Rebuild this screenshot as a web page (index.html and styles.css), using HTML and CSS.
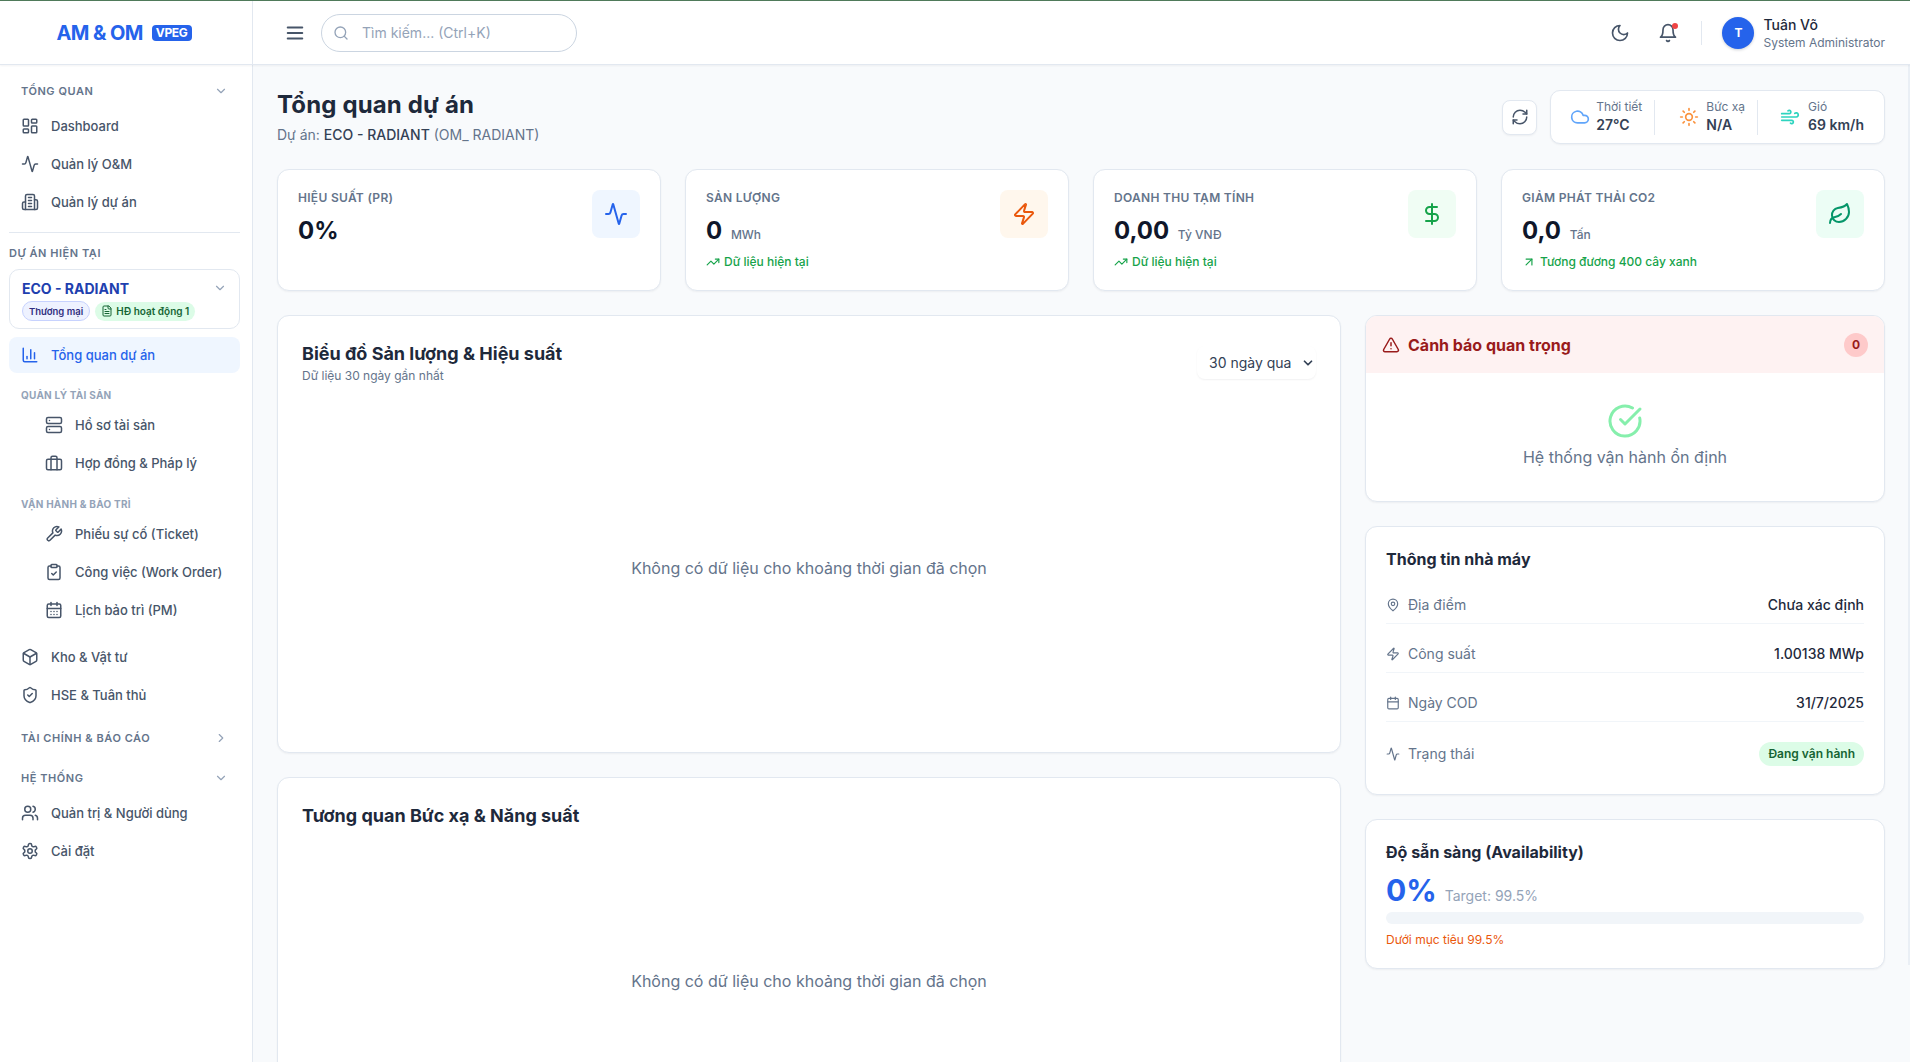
FILE: index.html
```html
<!DOCTYPE html>
<html lang="vi">
<head>
<meta charset="utf-8">
<title>AM &amp; OM</title>
<link rel="stylesheet" href="styles.css">
</head>
<body>
<svg class="sprite" width="0" height="0">
  <defs>
    <symbol id="i-dashboard" viewBox="0 0 24 24"><rect width="7" height="9" x="3" y="3" rx="1"/><rect width="7" height="5" x="14" y="3" rx="1"/><rect width="7" height="9" x="14" y="12" rx="1"/><rect width="7" height="5" x="3" y="16" rx="1"/></symbol>
    <symbol id="i-activity" viewBox="0 0 24 24"><path d="M22 12h-2.48a2 2 0 0 0-1.93 1.46l-2.35 8.36a.25.25 0 0 1-.48 0L9.24 2.18a.25.25 0 0 0-.48 0l-2.35 8.36A2 2 0 0 1 4.49 12H2"/></symbol>
    <symbol id="i-building" viewBox="0 0 24 24"><path d="M6 22V4a2 2 0 0 1 2-2h8a2 2 0 0 1 2 2v18Z"/><path d="M6 12H4a2 2 0 0 0-2 2v6a2 2 0 0 0 2 2h2"/><path d="M18 9h2a2 2 0 0 1 2 2v9a2 2 0 0 1-2 2h-2"/><path d="M10 6h4"/><path d="M10 10h4"/><path d="M10 14h4"/><path d="M10 18h4"/></symbol>
    <symbol id="i-down" viewBox="0 0 24 24"><path d="m6 9 6 6 6-6"/></symbol>
    <symbol id="i-right" viewBox="0 0 24 24"><path d="m9 18 6-6-6-6"/></symbol>
    <symbol id="i-chart" viewBox="0 0 24 24"><path d="M3 3v16a2 2 0 0 0 2 2h16"/><path d="M18 17V9"/><path d="M13 17V5"/><path d="M8 17v-3"/></symbol>
    <symbol id="i-server" viewBox="0 0 24 24"><rect width="20" height="8" x="2" y="2" rx="2"/><rect width="20" height="8" x="2" y="14" rx="2"/><path d="M6 6h.01"/><path d="M6 18h.01"/></symbol>
    <symbol id="i-briefcase" viewBox="0 0 24 24"><path d="M16 21V5a2 2 0 0 0-2-2h-4a2 2 0 0 0-2 2v16"/><rect width="20" height="14" x="2" y="7" rx="2"/></symbol>
    <symbol id="i-wrench" viewBox="0 0 24 24"><path d="M14.7 6.3a1 1 0 0 0 0 1.4l1.6 1.6a1 1 0 0 0 1.4 0l3.77-3.77a6 6 0 0 1-7.94 7.94l-6.91 6.91a2.12 2.12 0 0 1-3-3l6.91-6.91a6 6 0 0 1 7.94-7.94l-3.76 3.76z"/></symbol>
    <symbol id="i-clipboard" viewBox="0 0 24 24"><rect width="8" height="4" x="8" y="2" rx="1" ry="1"/><path d="M16 4h2a2 2 0 0 1 2 2v14a2 2 0 0 1-2 2H6a2 2 0 0 1-2-2V6a2 2 0 0 1 2-2h2"/><path d="m9 14 2 2 4-4"/></symbol>
    <symbol id="i-calendar-days" viewBox="0 0 24 24"><path d="M8 2v4"/><path d="M16 2v4"/><rect width="18" height="18" x="3" y="4" rx="2"/><path d="M3 10h18"/><path d="M8 14h.01"/><path d="M12 14h.01"/><path d="M16 14h.01"/><path d="M8 18h.01"/><path d="M12 18h.01"/><path d="M16 18h.01"/></symbol>
    <symbol id="i-box" viewBox="0 0 24 24"><path d="M21 8a2 2 0 0 0-1-1.73l-7-4a2 2 0 0 0-2 0l-7 4A2 2 0 0 0 3 8v8a2 2 0 0 0 1 1.73l7 4a2 2 0 0 0 2 0l7-4A2 2 0 0 0 21 16Z"/><path d="m3.3 7 8.7 5 8.7-5"/><path d="M12 22V12"/></symbol>
    <symbol id="i-shield" viewBox="0 0 24 24"><path d="M20 13c0 5-3.5 7.5-7.66 8.95a1 1 0 0 1-.67-.01C7.5 20.5 4 18 4 13V6a1 1 0 0 1 1-1c2 0 4.5-1.2 6.24-2.72a1.17 1.17 0 0 1 1.52 0C14.51 3.81 17 5 19 5a1 1 0 0 1 1 1z"/><path d="m9 12 2 2 4-4"/></symbol>
    <symbol id="i-users" viewBox="0 0 24 24"><path d="M16 21v-2a4 4 0 0 0-4-4H6a4 4 0 0 0-4 4v2"/><circle cx="9" cy="7" r="4"/><path d="M22 21v-2a4 4 0 0 0-3-3.87"/><path d="M16 3.13a4 4 0 0 1 0 7.75"/></symbol>
    <symbol id="i-settings" viewBox="0 0 24 24"><path d="M12.22 2h-.44a2 2 0 0 0-2 2v.18a2 2 0 0 1-1 1.73l-.43.25a2 2 0 0 1-2 0l-.15-.08a2 2 0 0 0-2.73.73l-.22.38a2 2 0 0 0 .73 2.73l.15.1a2 2 0 0 1 1 1.72v.51a2 2 0 0 1-1 1.74l-.15.09a2 2 0 0 0-.73 2.73l.22.38a2 2 0 0 0 2.73.73l.15-.08a2 2 0 0 1 2 0l.43.25a2 2 0 0 1 1 1.73V20a2 2 0 0 0 2 2h.44a2 2 0 0 0 2-2v-.18a2 2 0 0 1 1-1.73l.43-.25a2 2 0 0 1 2 0l.15.08a2 2 0 0 0 2.73-.73l.22-.39a2 2 0 0 0-.73-2.73l-.15-.08a2 2 0 0 1-1-1.74v-.5a2 2 0 0 1 1-1.74l.15-.09a2 2 0 0 0 .73-2.73l-.22-.38a2 2 0 0 0-2.73-.73l-.15.08a2 2 0 0 1-2 0l-.43-.25a2 2 0 0 1-1-1.73V4a2 2 0 0 0-2-2z"/><circle cx="12" cy="12" r="3"/></symbol>
    <symbol id="i-menu" viewBox="0 0 24 24"><path d="M4 12h16"/><path d="M4 6h16"/><path d="M4 18h16"/></symbol>
    <symbol id="i-search" viewBox="0 0 24 24"><circle cx="11" cy="11" r="8"/><path d="m21 21-4.3-4.3"/></symbol>
    <symbol id="i-moon" viewBox="0 0 24 24"><path d="M12 3a6 6 0 0 0 9 9 9 9 0 1 1-9-9Z"/></symbol>
    <symbol id="i-bell" viewBox="0 0 24 24"><path d="M6 8a6 6 0 0 1 12 0c0 7 3 9 3 9H3s3-2 3-9"/><path d="M10.3 21a1.94 1.94 0 0 0 3.4 0"/></symbol>
    <symbol id="i-refresh" viewBox="0 0 24 24"><path d="M3 12a9 9 0 0 1 9-9 9.75 9.75 0 0 1 6.74 2.74L21 8"/><path d="M21 3v5h-5"/><path d="M21 12a9 9 0 0 1-9 9 9.75 9.75 0 0 1-6.74-2.74L3 16"/><path d="M8 16H3v5"/></symbol>
    <symbol id="i-cloud" viewBox="0 0 24 24"><path d="M17.5 19H9a7 7 0 1 1 6.71-9h1.79a4.5 4.5 0 1 1 0 9Z"/></symbol>
    <symbol id="i-sun" viewBox="0 0 24 24"><circle cx="12" cy="12" r="4"/><path d="M12 2v2"/><path d="M12 20v2"/><path d="m4.93 4.93 1.41 1.41"/><path d="m17.66 17.66 1.41 1.41"/><path d="M2 12h2"/><path d="M20 12h2"/><path d="m6.34 17.66-1.41 1.41"/><path d="m19.07 4.93-1.41 1.41"/></symbol>
    <symbol id="i-wind" viewBox="0 0 24 24"><path d="M17.7 7.7a2.5 2.5 0 1 1 1.8 4.3H2"/><path d="M9.6 4.6A2 2 0 1 1 11 8H2"/><path d="M12.6 19.4A2 2 0 1 0 14 16H2"/></symbol>
    <symbol id="i-zap" viewBox="0 0 24 24"><path d="M4 14a1 1 0 0 1-.78-1.63l9.9-10.2a.5.5 0 0 1 .86.46l-1.92 6.02A1 1 0 0 0 13 10h7a1 1 0 0 1 .78 1.63l-9.9 10.2a.5.5 0 0 1-.86-.46l1.92-6.02A1 1 0 0 0 11 14z"/></symbol>
    <symbol id="i-dollar" viewBox="0 0 24 24"><path d="M12 2v20"/><path d="M17 5H9.5a3.5 3.5 0 0 0 0 7h5a3.5 3.5 0 0 1 0 7H6"/></symbol>
    <symbol id="i-leaf" viewBox="0 0 24 24"><path d="M11 20A7 7 0 0 1 9.8 6.1C15.5 5 17 4.48 19 2c1 2 2 4.18 2 8 0 5.5-4.78 10-10 10Z"/><path d="M2 21c0-3 1.85-5.36 5.08-6C9.5 14.52 12 13 13 12"/></symbol>
    <symbol id="i-trend" viewBox="0 0 24 24"><path d="M22 7 13.5 15.5 8.5 10.5 2 17"/><path d="M16 7h6v6"/></symbol>
    <symbol id="i-arrow" viewBox="0 0 24 24"><path d="M7 7h10v10"/><path d="M7 17 17 7"/></symbol>
    <symbol id="i-alert" viewBox="0 0 24 24"><path d="m21.73 18-8-14a2 2 0 0 0-3.48 0l-8 14A2 2 0 0 0 4 21h16a2 2 0 0 0 1.73-3"/><path d="M12 9v4"/><path d="M12 17h.01"/></symbol>
    <symbol id="i-check" viewBox="0 0 24 24"><path d="M21.801 10A10 10 0 1 1 17 3.335"/><path d="m9 11 3 3L22 4"/></symbol>
    <symbol id="i-pin" viewBox="0 0 24 24"><path d="M20 10c0 6-8 12-8 12s-8-6-8-12a8 8 0 0 1 16 0Z"/><circle cx="12" cy="10" r="3"/></symbol>
    <symbol id="i-calendar" viewBox="0 0 24 24"><path d="M8 2v4"/><path d="M16 2v4"/><rect width="18" height="18" x="3" y="4" rx="2"/><path d="M3 10h18"/></symbol>
    <symbol id="i-file" viewBox="0 0 24 24"><path d="M15 2H6a2 2 0 0 0-2 2v16a2 2 0 0 0 2 2h12a2 2 0 0 0 2-2V7Z"/><path d="M14 2v4a2 2 0 0 0 2 2h4"/><path d="M10 9H8"/><path d="M16 13H8"/><path d="M16 17H8"/></symbol>
  </defs>
</svg>

<div class="app">
  <header class="topbar">
    <div class="brand">
      <span class="brand-name">AM &amp; OM</span>
      <span class="brand-tag">VPEG</span>
    </div>
    <div class="topbar-main">
      <div class="topbar-left">
        <svg class="ico ico-22 c-slate"><use href="#i-menu"/></svg>
        <div class="search">
          <svg class="ico ico-16 c-muted"><use href="#i-search"/></svg>
          <span>Tìm kiếm... (Ctrl+K)</span>
        </div>
      </div>
      <div class="topbar-right">
        <svg class="ico ico-20 c-slate"><use href="#i-moon"/></svg>
        <div class="bell">
          <svg class="ico ico-20 c-slate"><use href="#i-bell"/></svg>
          <span class="bell-dot"></span>
        </div>
        <span class="topbar-sep"></span>
        <div class="user">
          <span class="avatar">T</span>
          <div class="user-text">
            <div class="user-name">Tuân Võ</div>
            <div class="user-role">System Administrator</div>
          </div>
        </div>
      </div>
    </div>
  </header>

  <div class="body">
    <aside class="sidebar">
      <div class="group-head first"><span>TỔNG QUAN</span><svg class="ico ico-14 c-muted"><use href="#i-down"/></svg></div>
      <nav class="nav nav-a">
        <a class="nav-item"><svg class="ico ico-18"><use href="#i-dashboard"/></svg>Dashboard</a>
        <a class="nav-item"><svg class="ico ico-18"><use href="#i-activity"/></svg>Quản lý O&amp;M</a>
        <a class="nav-item"><svg class="ico ico-18"><use href="#i-building"/></svg>Quản lý dự án</a>
      </nav>
      <div class="side-divider"></div>
      <div class="project-label">DỰ ÁN HIỆN TẠI</div>
      <div class="project-card">
        <div class="project-top"><span class="project-name">ECO - RADIANT</span><svg class="ico ico-14 c-muted"><use href="#i-down"/></svg></div>
        <div class="project-tags">
          <span class="tag tag-purple">Thương mại</span>
          <span class="tag tag-green"><svg class="ico ico-12"><use href="#i-file"/></svg>HĐ hoạt động 1</span>
        </div>
      </div>
      <a class="nav-item active"><svg class="ico ico-18"><use href="#i-chart"/></svg>Tổng quan dự án</a>

      <div class="sub-label sub-1">QUẢN LÝ TÀI SẢN</div>
      <nav class="nav nav-sub">
        <a class="nav-item"><svg class="ico ico-18"><use href="#i-server"/></svg>Hồ sơ tài sản</a>
        <a class="nav-item"><svg class="ico ico-18"><use href="#i-briefcase"/></svg>Hợp đồng &amp; Pháp lý</a>
      </nav>
      <div class="sub-label sub-2">VẬN HÀNH &amp; BẢO TRÌ</div>
      <nav class="nav nav-sub">
        <a class="nav-item"><svg class="ico ico-18"><use href="#i-wrench"/></svg>Phiếu sự cố (Ticket)</a>
        <a class="nav-item"><svg class="ico ico-18"><use href="#i-clipboard"/></svg>Công việc (Work Order)</a>
        <a class="nav-item"><svg class="ico ico-18"><use href="#i-calendar-days"/></svg>Lịch bảo trì (PM)</a>
      </nav>
      <nav class="nav nav-b">
        <a class="nav-item"><svg class="ico ico-18"><use href="#i-box"/></svg>Kho &amp; Vật tư</a>
        <a class="nav-item"><svg class="ico ico-18"><use href="#i-shield"/></svg>HSE &amp; Tuân thủ</a>
      </nav>
      <div class="group-head fin"><span>TÀI CHÍNH &amp; BÁO CÁO</span><svg class="ico ico-14 c-muted"><use href="#i-right"/></svg></div>
      <div class="group-head sys"><span>HỆ THỐNG</span><svg class="ico ico-14 c-muted"><use href="#i-down"/></svg></div>
      <nav class="nav nav-c">
        <a class="nav-item"><svg class="ico ico-18"><use href="#i-users"/></svg>Quản trị &amp; Người dùng</a>
        <a class="nav-item"><svg class="ico ico-18"><use href="#i-settings"/></svg>Cài đặt</a>
      </nav>
    </aside>

    <main class="main">
      <div class="page-head">
        <div>
          <h1 class="page-title">Tổng quan dự án</h1>
          <p class="page-sub">Dự án: <b>ECO - RADIANT</b> (OM_ RADIANT)</p>
        </div>
        <div class="head-tools">
          <button class="refresh"><svg class="ico ico-18"><use href="#i-refresh"/></svg></button>
          <div class="weather">
            <div class="w-item">
              <svg class="ico ico-20 c-blue-l"><use href="#i-cloud"/></svg>
              <div><div class="w-label">Thời tiết</div><div class="w-value">27°C</div></div>
            </div>
            <div class="w-item">
              <svg class="ico ico-20 c-orange-l"><use href="#i-sun"/></svg>
              <div><div class="w-label">Bức xạ</div><div class="w-value">N/A</div></div>
            </div>
            <div class="w-item">
              <svg class="ico ico-20 c-teal"><use href="#i-wind"/></svg>
              <div><div class="w-label">Gió</div><div class="w-value">69 km/h</div></div>
            </div>
          </div>
        </div>
      </div>

      <section class="kpis">
        <article class="card kpi">
          <div>
            <div class="kpi-label">HIỆU SUẤT (PR)</div>
            <div class="kpi-value">0%</div>
          </div>
          <span class="kpi-icon bg-blue"><svg class="ico ico-24"><use href="#i-activity"/></svg></span>
        </article>
        <article class="card kpi">
          <div>
            <div class="kpi-label">SẢN LƯỢNG</div>
            <div class="kpi-value">0 <small>MWh</small></div>
            <div class="kpi-trend"><svg class="ico ico-14"><use href="#i-trend"/></svg>Dữ liệu hiện tại</div>
          </div>
          <span class="kpi-icon bg-orange"><svg class="ico ico-24"><use href="#i-zap"/></svg></span>
        </article>
        <article class="card kpi">
          <div>
            <div class="kpi-label">DOANH THU TẠM TÍNH</div>
            <div class="kpi-value">0,00 <small>Tỷ VNĐ</small></div>
            <div class="kpi-trend"><svg class="ico ico-14"><use href="#i-trend"/></svg>Dữ liệu hiện tại</div>
          </div>
          <span class="kpi-icon bg-green"><svg class="ico ico-24"><use href="#i-dollar"/></svg></span>
        </article>
        <article class="card kpi">
          <div>
            <div class="kpi-label">GIẢM PHÁT THẢI CO2</div>
            <div class="kpi-value">0,0 <small>Tấn</small></div>
            <div class="kpi-trend"><svg class="ico ico-14"><use href="#i-arrow"/></svg>Tương đương 400 cây xanh</div>
          </div>
          <span class="kpi-icon bg-emerald"><svg class="ico ico-24"><use href="#i-leaf"/></svg></span>
        </article>
      </section>

      <section class="columns">
        <div class="col-left">
          <article class="card chart chart-1">
            <div class="chart-head">
              <div>
                <h2 class="chart-title">Biểu đồ Sản lượng &amp; Hiệu suất</h2>
                <p class="chart-sub">Dữ liệu 30 ngày gần nhất</p>
              </div>
              <div class="range">30 ngày qua<svg class="ico ico-14"><use href="#i-down"/></svg></div>
            </div>
            <div class="chart-empty">Không có dữ liệu cho khoảng thời gian đã chọn</div>
          </article>
          <article class="card chart chart-2">
            <div class="chart-head">
              <h2 class="chart-title">Tương quan Bức xạ &amp; Năng suất</h2>
            </div>
            <div class="chart-empty">Không có dữ liệu cho khoảng thời gian đã chọn</div>
          </article>
        </div>

        <div class="col-right">
          <article class="card alert">
            <div class="alert-head">
              <svg class="ico ico-18"><use href="#i-alert"/></svg>
              <span class="alert-title">Cảnh báo quan trọng</span>
              <span class="alert-count">0</span>
            </div>
            <div class="alert-body">
              <svg class="ico ico-36 c-ok"><use href="#i-check"/></svg>
              <div>Hệ thống vận hành ổn định</div>
            </div>
          </article>

          <article class="card panel">
            <h3 class="panel-title plant-title">Thông tin nhà máy</h3>
            <div class="row"><span class="row-key"><svg class="ico ico-14"><use href="#i-pin"/></svg>Địa điểm</span><span class="row-val">Chưa xác định</span></div>
            <div class="row"><span class="row-key"><svg class="ico ico-14"><use href="#i-zap"/></svg>Công suất</span><span class="row-val">1.00138 MWp</span></div>
            <div class="row"><span class="row-key"><svg class="ico ico-14"><use href="#i-calendar"/></svg>Ngày COD</span><span class="row-val">31/7/2025</span></div>
            <div class="row row-last"><span class="row-key"><svg class="ico ico-14"><use href="#i-activity"/></svg>Trạng thái</span><span class="status">Đang vận hành</span></div>
          </article>

          <article class="card panel">
            <h3 class="panel-title">Độ sẵn sàng (Availability)</h3>
            <div class="avail"><span class="avail-num">0%</span><span class="avail-target">Target: 99.5%</span></div>
            <div class="bar"></div>
            <div class="avail-note">Dưới mục tiêu 99.5%</div>
          </article>
        </div>
      </section>
    </main>
  </div>
</div>
</body>
</html>
```

FILE: styles.css
```css
* { box-sizing: border-box; }
html, body { margin: 0; height: 100%; overflow: hidden; }
body { font-family: Inter, "Noto Sans", "Liberation Sans", sans-serif; color: #0f172a; background: #f8fafc; }
h1, h2, h3, p { margin: 0; }
.sprite { position: absolute; }

.ico { fill: none; stroke: currentColor; stroke-width: 2; stroke-linecap: round; stroke-linejoin: round; flex: none; display: block; }
.ico-12 { width: 12px; height: 12px; }
.ico-14 { width: 14px; height: 14px; }
.ico-16 { width: 16px; height: 16px; }
.ico-18 { width: 18px; height: 18px; }
.ico-20 { width: 20px; height: 20px; }
.ico-22 { width: 22px; height: 22px; }
.ico-24 { width: 24px; height: 24px; }
.ico-36 { width: 36px; height: 36px; }
.c-muted { color: #94a3b8; }
.c-slate { color: #475569; }
.c-blue-l { color: #60a5fa; }
.c-orange-l { color: #fb923c; }
.c-teal { color: #2dd4bf; }
.c-ok { color: #86efac; }

.app { height: 100vh; display: flex; flex-direction: column; border-top: 1px solid #4f7a5a; }

.topbar { height: 64px; flex: none; display: flex; background: #fff; border-bottom: 1px solid #e2e8f0; box-shadow: 0 1px 2px rgba(15, 23, 42, .05); position: relative; z-index: 2; }
.brand { width: 253px; flex: none; display: flex; align-items: center; justify-content: center; gap: 9px; padding-right: 4px; border-right: 1px solid #e2e8f0; }
.brand-name { font-size: 20px; font-weight: 700; color: #2563eb; letter-spacing: -.6px; }
.brand-tag { background: #2563eb; color: #fff; font-size: 12px; font-weight: 700; line-height: 16px; padding: 0 4px; border-radius: 4px; letter-spacing: -.3px; }
.topbar-main { flex: 1; display: flex; align-items: center; justify-content: space-between; padding: 0 25px 0 31px; }
.topbar-left { display: flex; align-items: center; gap: 15px; }
.search { width: 256px; height: 38px; display: flex; align-items: center; gap: 13px; padding: 0 11px; border: 1px solid #cbd5e1; border-radius: 19px; font-size: 14px; color: #94a3b8; }
.topbar-right { display: flex; align-items: center; gap: 28px; }
.bell { position: relative; }
.bell-dot { position: absolute; top: 0; right: 0; width: 6px; height: 6px; border-radius: 50%; background: #ef4444; }
.topbar-sep { width: 1px; height: 24px; background: #e2e8f0; margin: 0 -8px 0 -5px; }
.user { display: flex; align-items: center; gap: 9px; }
.avatar { width: 32px; height: 32px; border-radius: 50%; background: #2563eb; color: #fff; font-size: 12px; font-weight: 700; display: flex; align-items: center; justify-content: center; box-shadow: 0 1px 3px rgba(15, 23, 42, .2); }
.user-name { font-size: 14px; line-height: 20px; font-weight: 500; color: #1e293b; }
.user-role { font-size: 12px; line-height: 16px; color: #64748b; }

.body { flex: 1; min-height: 0; display: flex; position: relative; }
.body::after { content: ""; position: absolute; top: 0; right: 0; width: 2px; height: 900px; background: #eaeff5; }
.sidebar { width: 253px; flex: none; background: #fff; border-right: 1px solid #e2e8f0; padding: 0 12px 0 9px; overflow: hidden; }
.group-head { height: 28px; display: flex; align-items: center; justify-content: space-between; padding: 0 12px; font-size: 11px; font-weight: 600; color: #64748b; letter-spacing: .55px; }
.group-head.first { margin-top: 12px; }
.group-head.fin { margin-top: 11px; }
.group-head.sys { margin-top: 12px; }
.nav { display: flex; flex-direction: column; gap: 2px; }
.nav-a { margin-top: 3px; }
.nav-b { margin-top: 11px; }
.nav-c { margin-top: 3px; }
.nav-item { height: 36px; display: flex; align-items: center; gap: 12px; padding: 0 12px; border-radius: 8px; font-size: 13px; font-weight: 500; color: #475569; white-space: nowrap; }
.nav-sub .nav-item { padding-left: 36px; }
.nav-item.active { background: #eff6ff; color: #2563eb; margin-top: 8px; }
.side-divider { height: 1px; background: #e2e8f0; margin-top: 12px; }
.project-label { margin-top: 12px; font-size: 11px; line-height: 16px; font-weight: 600; color: #64748b; letter-spacing: .55px; }
.project-card { margin-top: 8px; height: 60px; border: 1px solid #e2e8f0; border-radius: 10px; padding: 7px 12px 0 12px; }
.project-top { display: flex; align-items: center; justify-content: space-between; height: 22px; }
.project-name { font-size: 14px; font-weight: 700; color: #1e40af; }
.project-tags { display: flex; align-items: center; gap: 5px; margin-top: 2px; }
.tag { display: inline-flex; align-items: center; gap: 3px; height: 20px; border-radius: 10px; font-size: 10px; font-weight: 600; padding: 0 6px; white-space: nowrap; }
.tag-purple { background: #eef2ff; color: #312e81; border: 1px solid #c7d2fe; font-size: 9.5px; }
.tag-green { background: #dcfce7; color: #166534; height: 19px; }
.sub-label { font-size: 10px; line-height: 16px; font-weight: 700; color: #94a3b8; padding-left: 12px; letter-spacing: .25px; }
.sub-1 { margin-top: 14px; }
.sub-2 { margin-top: 15px; }
.nav-sub { margin-top: 4px; }

.main { flex: 1; min-width: 0; padding: 24px 25px 0 24px; overflow: hidden; }
.page-head { display: flex; align-items: center; justify-content: space-between; }
.page-title { font-size: 24px; line-height: 32px; font-weight: 700; color: #1e293b; letter-spacing: .15px; }
.page-sub { margin-top: 4px; font-size: 14px; line-height: 20px; color: #64748b; }
.page-sub b { font-weight: 500; color: #334155; }
.head-tools { display: flex; align-items: center; gap: 13px; }
.refresh { width: 35px; height: 35px; display: flex; align-items: center; justify-content: center; padding: 0; background: #fff; border: 1px solid #e2e8f0; border-radius: 8px; color: #475569; box-shadow: 0 1px 2px rgba(15, 23, 42, .05); }
.weather { display: flex; align-items: center; height: 54px; background: #fff; border: 1px solid #e2e8f0; border-radius: 10px; padding: 0 20px 0 19px; box-shadow: 0 1px 2px rgba(15, 23, 42, .05); }
.w-item { display: flex; align-items: center; gap: 7px; height: 35px; padding: 0 12px 0 24px; border-right: 1px solid #e2e8f0; }
.w-item:first-child { padding-left: 0; gap: 6px; }
.w-item:last-child { padding: 0 0 0 22px; gap: 8px; border-right: 0; }
.w-label { font-size: 12px; line-height: 16px; color: #64748b; }
.w-value { font-size: 14px; line-height: 20px; font-weight: 600; color: #334155; }

.card { background: #fff; border: 1px solid #e2e8f0; border-radius: 12px; box-shadow: 0 1px 2px rgba(15, 23, 42, .05); }
.kpis { margin-top: 24px; display: grid; grid-template-columns: repeat(4, 1fr); gap: 24px; }
.kpi { height: 122px; padding: 20px; display: flex; justify-content: space-between; align-items: flex-start; }
.kpi-label { font-size: 12px; line-height: 16px; font-weight: 600; color: #64748b; letter-spacing: .3px; }
.kpi-value { margin-top: 9px; font-size: 24px; line-height: 32px; font-weight: 700; color: #0f172a; white-space: nowrap; }
.kpi-value small { font-size: 12px; font-weight: 500; color: #64748b; margin-left: 3px; }
.kpi-trend { margin-top: 3px; display: flex; align-items: center; gap: 4px; font-size: 12px; line-height: 16px; font-weight: 500; color: #16a34a; }
.kpi-icon { width: 48px; height: 48px; border-radius: 8px; display: flex; align-items: center; justify-content: center; }
.bg-blue { background: #eff6ff; color: #2563eb; }
.bg-orange { background: #fff7ed; color: #ea580c; }
.bg-green { background: #f0fdf4; color: #16a34a; }
.bg-emerald { background: #ecfdf5; color: #059669; }

.columns { margin-top: 24px; display: grid; grid-template-columns: repeat(3, 1fr); gap: 24px; align-items: start; }
.col-left { grid-column: span 2; display: flex; flex-direction: column; gap: 24px; }
.col-right { display: flex; flex-direction: column; gap: 24px; }
.chart { padding: 24px; display: flex; flex-direction: column; }
.chart-1 { height: 438px; padding-bottom: 0; }
.chart-2 .chart-empty { flex: none; height: 302px; }
.chart-head { display: flex; align-items: flex-start; justify-content: space-between; }
.chart-title { font-size: 18px; line-height: 28px; font-weight: 700; color: #1e293b; }
.chart-sub { font-size: 12px; line-height: 16px; color: #64748b; }
.range { width: 119px; height: 33px; margin-top: 6px; display: flex; align-items: center; justify-content: space-between; padding: 0 1px 0 12px; font-size: 14px; color: #334155; border-radius: 8px; box-shadow: 0 1px 2px rgba(15, 23, 42, .06); }
.range .ico { stroke-width: 3; }
.chart-empty { flex: 1; display: flex; align-items: center; justify-content: center; font-size: 16px; color: #64748b; }

.alert { overflow: hidden; }
.alert-head { height: 57px; display: flex; align-items: center; padding: 0 16px; background: #fef2f2; color: #991b1b; }
.alert-title { margin-left: 8px; flex: 1; font-size: 16px; font-weight: 700; }
.alert-count { width: 24px; height: 24px; border-radius: 50%; background: #fecaca; display: flex; align-items: center; justify-content: center; font-size: 12px; font-weight: 700; }
.alert-body { padding: 30px 0 32px; display: flex; flex-direction: column; align-items: center; gap: 6px; font-size: 16px; line-height: 24px; color: #64748b; }

.panel { padding: 20px; }
.panel-title { font-size: 16px; line-height: 24px; font-weight: 700; color: #1e293b; }
.plant-title { margin-bottom: 24px; }
.row { display: flex; align-items: center; justify-content: space-between; font-size: 14px; line-height: 20px; padding-bottom: 8px; border-bottom: 1px solid #f1f5f9; margin-bottom: 20px; }
.row-last { border-bottom: 0; margin-bottom: 0; }
.row-key { display: flex; align-items: center; gap: 8px; color: #64748b; }
.row-val { font-weight: 500; color: #1e293b; }
.status { height: 24px; display: flex; align-items: center; padding: 0 9px; border-radius: 12px; background: #dcfce7; color: #166534; font-size: 12px; font-weight: 600; }
.avail { margin-top: 8px; display: flex; align-items: baseline; gap: 8px; height: 36px; }
.avail-num { font-size: 30px; line-height: 36px; font-weight: 700; color: #2563eb; }
.avail-target { font-size: 14px; color: #94a3b8; }
.bar { margin-top: 4px; height: 12px; border-radius: 6px; background: #f1f5f9; }
.avail-note { margin-top: 8px; font-size: 12px; line-height: 16px; color: #ea580c; }
```
